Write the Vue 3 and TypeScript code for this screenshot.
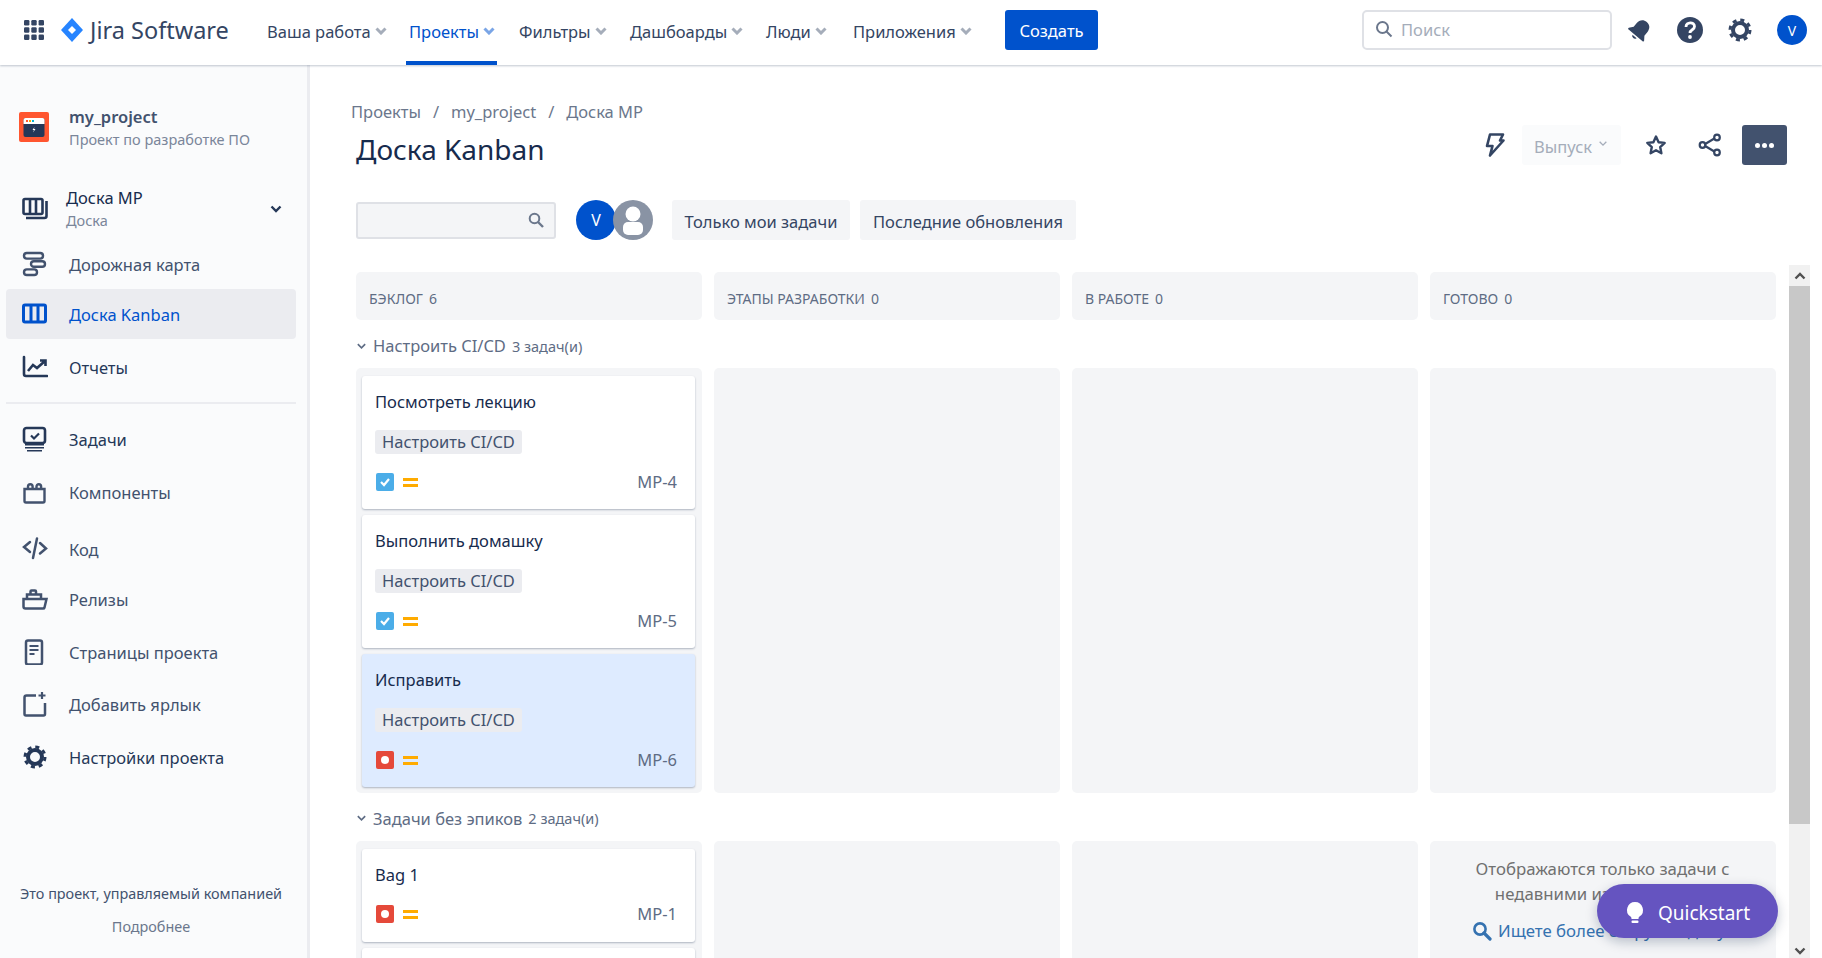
<script setup lang="ts">
interface NavItem { label: string; active?: boolean; w: number }
interface SideItem { label: string; icon: string; top: number; active?: boolean; dark?: boolean }
interface Card { title: string; epic?: string; type: 'task' | 'bug'; key: string; selected?: boolean }

const navItems: NavItem[] = [
  { label: 'Ваша работа', w: 142 },
  { label: 'Проекты', active: true, w: 110 },
  { label: 'Фильтры', w: 111 },
  { label: 'Дашбоарды', w: 136 },
  { label: 'Люди', w: 87 }
]

const sideTop: SideItem[] = [
  { label: 'Дорожная карта', icon: 'roadmap', top: 0 },
  { label: 'Доска Kanban', icon: 'kanban', top: 0, active: true },
  { label: 'Отчеты', icon: 'reports', top: 3, dark: true }
]

const sideBottom: SideItem[] = [
  { label: 'Задачи', icon: 'issues', top: 10, dark: true },
  { label: 'Компоненты', icon: 'components', top: 3 },
  { label: 'Код', icon: 'code', top: 7 },
  { label: 'Релизы', icon: 'releases', top: 0 },
  { label: 'Страницы проекта', icon: 'pages', top: 3 },
  { label: 'Добавить ярлык', icon: 'shortcut', top: 2 },
  { label: 'Настройки проекта', icon: 'settings', top: 3, dark: true }
]

const gear = '<circle cx="13" cy="13" r="7" fill="none" stroke="currentColor" stroke-width="4"/><circle cx="13" cy="13" r="10" fill="none" stroke="currentColor" stroke-width="3" stroke-dasharray="4 3.85"/>'

const icons: Record<string, string> = {
  roadmap: '<g fill="none" stroke="currentColor" stroke-width="2.4"><rect x="2" y="2" width="19" height="5.6" rx="2.8"/><rect x="9" y="10.2" width="14" height="5.6" rx="2.8"/><rect x="2" y="18.4" width="13" height="5.6" rx="2.8"/></g>',
  kanban: '<g fill="none" stroke="currentColor" stroke-width="3"><rect x="1.5" y="4" width="22" height="17" rx="1.5"/><path d="M9 4v17M16 4v17"/></g>',
  reports: '<g fill="none" stroke="currentColor" stroke-width="2.6"><path d="M2 3v17a2 2 0 0 0 2 2h21" stroke-linecap="round"/><path d="M6 17l5-6 4 3 8-7M18 6.5h5.5V12"/></g>',
  issues: '<rect x="2" y="2" width="21" height="15" rx="2.5" fill="none" stroke="currentColor" stroke-width="2.6"/><path d="M9 9.5l3 3 5-5" fill="none" stroke="currentColor" stroke-width="2.2"/><path d="M3 18h19v1.4H3zM3 21h19v1.6H3zM5 24h15v1.4H5z" fill="currentColor"/>',
  components: '<path d="M2.5 10h20v12a1.5 1.5 0 0 1-1.5 1.500H4A1.500 1.500 0 0 1 2.500 22zM6 10V7.500a2.300 2.300 0 0 1 4.600 0V10M14.500 10V7.500a2.300 2.300 0 0 1 4.600 0V10" fill="none" stroke="currentColor" stroke-width="2.400"/>',
  code: '<g fill="none" stroke="currentColor" stroke-width="2.500" stroke-linecap="round"><path d="M8 6l-6 5 6 5M18 7l6 5.500-6 5M15 2.500L11 22"/></g>',
  releases: '<g fill="none" stroke="currentColor" stroke-width="2.500"><path d="M1.500 13h23l-2 8.500a1.500 1.500 0 0 1-1.500 1H3.500a2 2 0 0 1-2-2zM5 13V8.500h14V13M8.500 8.500V5.500a1 1 0 0 1 1-1h3.500a1 1 0 0 1 1 1v3"/></g>',
  pages: '<rect x="4" y="1.500" width="16" height="24" rx="2" fill="none" stroke="currentColor" stroke-width="2.500"/><path d="M7.500 6h9v2h-9zM7.500 10h9v2h-9zM7.500 14h5v2h-5z" fill="currentColor"/>',
  shortcut: '<path d="M14 4.500H4.500a2 2 0 0 0-2 2V23a1.500 1.500 0 0 0 1.500 1.500h17.500a1.500 1.500 0 0 0 1.500-1.500V12" fill="none" stroke="currentColor" stroke-width="2.500"/><path d="M20 1v7M16.500 4.500h7" fill="none" stroke="currentColor" stroke-width="2.200"/>',
  settings: gear
}

const lanes: { name: string; count: string; cards: Card[] }[] = [
  {
    name: 'Настроить CI/CD',
    count: '3 задач(и)',
    cards: [
      { title: 'Посмотреть лекцию', epic: 'Настроить CI/CD', type: 'task', key: 'MP-4' },
      { title: 'Выполнить домашку', epic: 'Настроить CI/CD', type: 'task', key: 'MP-5' },
      { title: 'Исправить', epic: 'Настроить CI/CD', type: 'bug', key: 'MP-6', selected: true }
    ]
  },
  {
    name: 'Задачи без эпиков',
    count: '2 задач(и)',
    cards: [
      { title: 'Bag 1', type: 'bug', key: 'MP-1' },
      { title: 'Bag 2', type: 'bug', key: 'MP-2' }
    ]
  }
]

const columns = [
  { name: 'Бэклог', count: 6 },
  { name: 'Этапы разработки', count: 0 },
  { name: 'В работе', count: 0 },
  { name: 'Готово', count: 0 }
]
</script>

<template>
  <div class="page">
    <header class="topbar">
      <svg class="apps" viewBox="0 0 20 20">
        <g fill="#344563">
          <rect v-for="c in 9" :key="c" :x="((c - 1) % 3) * 7.300" :y="Math.floor((c - 1) / 3) * 7.300" width="5.400" height="5.400" rx="1.200" />
        </g>
      </svg>
      <svg class="logo" viewBox="0 0 22 24">
        <path d="M11 0l11 12-11 12L0 12z" fill="#2684ff" />
        <path d="M11 8l4 4-4 4-4-4z" fill="#fff" />
      </svg>
      <span class="brand">Jira Software</span>
      <nav class="nav">
        <a v-for="item in navItems" :key="item.label" class="nav-item" :class="{ active: item.active }" :style="{ width: item.w + 'px' }">
          {{ item.label }}
          <svg class="caret" viewBox="0 0 12 8"><path d="M1.500 1.500L6 6l4.500-4.500" fill="none" stroke="currentColor" stroke-width="3" /></svg>
        </a>
        <a class="nav-item last">
          Приложения
          <svg class="caret" viewBox="0 0 12 8"><path d="M1.500 1.500L6 6l4.500-4.500" fill="none" stroke="currentColor" stroke-width="3" /></svg>
        </a>
      </nav>
      <button class="create">Создать</button>
      <div class="search">
        <svg width="18" height="18" viewBox="0 0 18 18"><circle cx="7.500" cy="7.500" r="5.500" fill="none" stroke="#6b778c" stroke-width="2" /><path d="M11.500 11.500l5 5" stroke="#6b778c" stroke-width="2" /></svg>
        <span>Поиск</span>
      </div>
      <div class="top-icons">
        <svg width="24" height="24" viewBox="0 0 24 24" fill="#344563">
          <g transform="rotate(40 12 12)">
            <path d="M12 1.500c-4.500 0-7 3.300-7 7.500v4.500L2 17.500v1.500h20v-1.500l-3-4V9c0-4.200-2.500-7.500-7-7.500z" />
            <path d="M9.300 20.500a2.800 2.800 0 0 0 5.400 0z" />
          </g>
        </svg>
        <svg width="26" height="26" viewBox="0 0 26 26">
          <circle cx="13" cy="13" r="13" fill="#344563" />
          <path d="M9 10c0-5.500 8.500-5.500 8.500-.5 0 3.500-4.500 3-4.500 6.500" fill="none" stroke="#fff" stroke-width="2.800" />
          <circle cx="13" cy="20" r="1.900" fill="#fff" />
        </svg>
        <svg class="top-gear" width="26" height="26" viewBox="0 0 26 26" v-html="gear"></svg>
        <span class="avatar">V</span>
      </div>
    </header>

    <div class="body">
      <aside class="sidebar">
        <div class="project">
          <svg class="project-icon" viewBox="0 0 30 30">
            <rect width="30" height="30" rx="2" fill="#ff5630" />
            <rect x="4.500" y="6" width="21" height="19" rx="2" fill="#253858" />
            <path d="M4.500 8a2 2 0 0 1 2-2h17a2 2 0 0 1 2 2v4h-21z" fill="#fff" />
            <rect x="7" y="8" width="2" height="2" fill="#ff5630" />
            <rect x="10" y="8" width="2" height="2" fill="#ffab00" />
            <rect x="13" y="8" width="2" height="2" fill="#00b8d9" />
            <path d="M15.500 15l-2 3h1.500l-1 2.500 2.500-3.500h-1.500z" fill="#fff" />
          </svg>
          <div>
            <div class="project-name">my_project</div>
            <div class="project-type">Проект по разработке ПО</div>
          </div>
        </div>

        <div class="board-switch">
          <svg class="side-icon" viewBox="0 0 26 26">
            <g fill="none" stroke="#253858" stroke-width="2.600">
              <rect x="1.500" y="3" width="19" height="15" rx="1.500" />
              <path d="M8 3v15M14 3v15" />
              <path d="M24.500 5v15a2 2 0 0 1-2 2H4" />
            </g>
          </svg>
          <div class="board-text">
            <div class="board-name">Доска МР</div>
            <div class="board-type">Доска</div>
          </div>
          <svg class="board-caret" viewBox="0 0 12 8"><path d="M1.500 1.500L6 6l4.500-4.500" fill="none" stroke="#253858" stroke-width="2.400" /></svg>
        </div>

        <a v-for="item in sideTop" :key="item.label" class="side-item" :class="{ active: item.active, dark: item.dark }" :style="{ marginTop: item.top + 'px' }">
          <svg class="side-icon" viewBox="0 0 26 26" v-html="icons[item.icon]"></svg>
          <span>{{ item.label }}</span>
        </a>
        <div class="side-divider"></div>
        <a v-for="item in sideBottom" :key="item.label" class="side-item" :class="{ dark: item.dark }" :style="{ marginTop: item.top + 'px' }">
          <svg class="side-icon" viewBox="0 0 26 26" v-html="icons[item.icon]"></svg>
          <span>{{ item.label }}</span>
        </a>

        <div class="side-foot">
          <div>Это проект, управляемый компанией</div>
          <div class="more-link">Подробнее</div>
        </div>
      </aside>

      <main class="main">
        <div class="page-head">
          <div>
            <div class="crumbs">
              <span>Проекты</span><i>/</i><span>my_project</span><i>/</i><span>Доска МР</span>
            </div>
            <h1>Доска Kanban</h1>
          </div>
          <div class="head-actions">
            <svg class="bolt" width="22" height="26" viewBox="0 0 22 26">
              <path d="M7 2.500h13l-3 6h3.500L7 23.500l2.500-9.500H4z" fill="none" stroke="#344563" stroke-width="2.600" stroke-linejoin="round" />
            </svg>
            <button class="release">Выпуск <svg viewBox="0 0 12 8"><path d="M2 2l4 4 4-4" fill="none" stroke="currentColor" stroke-width="1.600" /></svg></button>
            <svg class="star" width="22" height="22" viewBox="0 0 22 22">
              <path d="M11 2.500l2.600 5.700 6.100.7-4.500 4.200 1.200 6.100L11 16.200l-5.400 3 1.200-6.100-4.500-4.200 6.100-.7z" fill="none" stroke="#344563" stroke-width="2.400" stroke-linejoin="round" />
            </svg>
            <svg class="share" width="24" height="24" viewBox="0 0 24 24">
              <g fill="none" stroke="#344563" stroke-width="2.200">
                <path d="M5.500 12L18 4.500M5.500 12L18 19.500" />
                <circle cx="4.500" cy="12" r="2.800" fill="#fff" />
                <circle cx="19" cy="4.500" r="2.800" fill="#fff" />
                <circle cx="19" cy="19.500" r="2.800" fill="#fff" />
              </g>
            </svg>
            <button class="more"><b></b><b></b><b></b></button>
          </div>
        </div>

        <div class="filters">
          <div class="filter-search">
            <svg width="16" height="16" viewBox="0 0 16 16"><circle cx="6.500" cy="6.500" r="4.800" fill="none" stroke="#6b778c" stroke-width="2" /><path d="M10 10l5 5" stroke="#6b778c" stroke-width="2.400" /></svg>
          </div>
          <div class="people">
            <span class="person">V</span>
            <span class="person ghost">
              <svg width="40" height="40" viewBox="0 0 40 40">
                <circle cx="20" cy="14" r="7.500" fill="#fff" />
                <rect x="10" y="22" width="20" height="13" rx="5" fill="#fff" />
              </svg>
            </span>
          </div>
          <button class="quick first">Только мои задачи</button>
          <button class="quick">Последние обновления</button>
        </div>

        <div class="board-wrap">
          <div class="board">
            <div class="col-heads">
              <div v-for="col in columns" :key="col.name" class="col-head">{{ col.name }}<span>{{ col.count }}</span></div>
            </div>

            <section v-for="(lane, i) in lanes" :key="lane.name" class="lane">
              <div class="lane-title">
                <svg viewBox="0 0 12 8"><path d="M2 2l4 4 4-4" fill="none" stroke="#5e6c84" stroke-width="1.800" /></svg>
                {{ lane.name }}<small>{{ lane.count }}</small>
              </div>
              <div class="lane-cols">
                <div class="col">
                  <article v-for="card in lane.cards" :key="card.key" class="card" :class="{ selected: card.selected, short: !card.epic }">
                    <div class="card-title">{{ card.title }}</div>
                    <div v-if="card.epic" class="epic">{{ card.epic }}</div>
                    <div class="card-foot">
                      <span class="type" :class="card.type">
                        <svg v-if="card.type === 'task'" width="12" height="12" viewBox="0 0 12 12"><path d="M2 6l3 3 5-6" fill="none" stroke="#fff" stroke-width="2.200" /></svg>
                      </span>
                      <span class="priority"></span>
                      <span class="key">{{ card.key }}</span>
                    </div>
                  </article>
                </div>
                <div class="col"></div>
                <div class="col"></div>
                <div class="col notice-col">
                  <div v-if="i === 1" class="notice">
                    <p>Отображаются только задачи с недавними изменениями.</p>
                    <a>
                      <svg width="20" height="20" viewBox="0 0 20 20"><circle cx="8" cy="8" r="5.600" fill="none" stroke="#3572b0" stroke-width="2.600" /><path d="M12 12l6 6" stroke="#3572b0" stroke-width="3.200" stroke-linecap="round" /></svg>
                      Ищете более старую задачу?
                    </a>
                  </div>
                </div>
              </div>
            </section>
          </div>
          <div class="scrollbar">
            <div class="sb-btn"><svg width="12" height="8" viewBox="0 0 12 8"><path d="M1.500 6.500L6 2l4.500 4.500" fill="none" stroke="#505050" stroke-width="2.400" /></svg></div>
            <div class="sb-thumb"></div>
            <div class="sb-rest">
              <svg width="12" height="8" viewBox="0 0 12 8"><path d="M1.500 1.500L6 6l4.500-4.500" fill="none" stroke="#505050" stroke-width="2.400" /></svg>
            </div>
          </div>
        </div>
      </main>
    </div>

    <button class="quickstart">
      <svg width="20" height="24" viewBox="0 0 20 24">
        <path d="M10 1a8 8 0 0 0-4.500 14.600c.8.600 1 1.400 1 2.400h7c0-1 .2-1.800 1-2.400A8 8 0 0 0 10 1z" fill="#fff" />
        <rect x="6.500" y="19.500" width="7" height="2.500" rx="1" fill="#fff" />
      </svg>
      Quickstart
    </button>
  </div>
</template>

<style>
html,
body {
  margin: 0;
  overflow: hidden;
}
</style>

<style scoped>
.page {
  position: relative;
  width: 1822px;
  height: 958px;
  overflow: hidden;
  background: #fff;
  font-family: "Noto Sans", "Open Sans", sans-serif;
  font-size: 16.5px;
  color: #172b4d;
}

.topbar {
  position: relative;
  z-index: 2;
  display: flex;
  align-items: flex-start;
  height: 65px;
  box-sizing: border-box;
  padding-left: 24px;
  background: #fff;
  box-shadow: 0 1px 2px rgba(9, 30, 66, 0.25);
}

.apps {
  width: 20px;
  height: 20px;
  margin-top: 20px;
}

.logo {
  width: 22px;
  height: 24px;
  margin: 18px 0 0 17px;
}

.brand {
  margin: 13px 0 0 7px;
  width: 143px;
  font-size: 23.5px;
  line-height: 34px;
  color: #344563;
  white-space: nowrap;
}

.nav {
  display: flex;
  height: 65px;
  margin-left: 34px;
}

.nav-item {
  position: relative;
  display: flex;
  align-items: center;
  box-sizing: border-box;
  height: 62px;
  padding-left: 0;
  color: #344563;
  white-space: nowrap;
}

.nav-item.active {
  color: #0052cc;
}

.nav-item.active::after {
  content: "";
  position: absolute;
  left: -3px;
  bottom: -3px;
  width: 91px;
  height: 4px;
  background: #0052cc;
}

.nav-item.last {
  width: 152px;
}

.caret {
  width: 12px;
  height: 8px;
  margin-left: 4px;
  color: #a5adba;
}

.nav-item.active .caret {
  color: #7aa5e6;
}

.create {
  width: 93px;
  height: 40px;
  margin-top: 10px;
  padding: 0;
  border: 0;
  border-radius: 3px;
  background: #0052cc;
  color: #fff;
  font: inherit;
}

.search {
  display: flex;
  align-items: center;
  gap: 8px;
  width: 250px;
  height: 40px;
  box-sizing: border-box;
  margin: 10px 0 0 264px;
  padding: 0 0 2px 11px;
  border: 2px solid #dfe1e6;
  border-radius: 5px;
  color: #a5adba;
}

.top-icons {
  display: flex;
  align-items: center;
  height: 40px;
  margin: 10px 0 0 16px;
}

.top-icons svg:nth-child(2) {
  margin-left: 25px;
}

.top-gear {
  margin-left: 24px;
  color: #344563;
}

.avatar {
  display: flex;
  align-items: center;
  justify-content: center;
  width: 30px;
  height: 30px;
  margin-left: 24px;
  border-radius: 50%;
  background: #0052cc;
  color: #fff;
  font-size: 14px;
}

.body {
  display: flex;
  height: 893px;
}

.sidebar {
  position: relative;
  flex: none;
  width: 310px;
  box-sizing: border-box;
  padding: 0 11px 0 6px;
  background: #fafbfc;
  border-right: 3px solid #ebecf0;
}

.project {
  display: flex;
  align-items: center;
  height: 112px;
  padding: 11px 0 0 13px;
  box-sizing: border-box;
}

.project-icon {
  width: 30px;
  height: 30px;
  margin-right: 20px;
}

.project-name {
  font-weight: 600;
  color: #42526e;
}

.project-type {
  margin-top: 1px;
  font-size: 14.5px;
  color: #7a869a;
}

.board-switch {
  display: flex;
  align-items: center;
  height: 62px;
  padding-top: 1px;
  box-sizing: border-box;
}

.side-icon {
  flex: none;
  width: 26px;
  height: 26px;
  margin-left: 16px;
}

.board-text {
  margin-left: 18px;
}

.board-name {
  line-height: 23px;
}

.board-type {
  font-size: 14.5px;
  line-height: 23px;
  color: #7a869a;
}

.board-caret {
  width: 12px;
  height: 8px;
  margin-left: auto;
  margin-right: 14px;
}

.side-item {
  display: flex;
  align-items: center;
  height: 50px;
  border-radius: 4px;
  color: #42526e;
}

.side-item span {
  margin-left: 21px;
}

.side-item.dark {
  color: #253858;
}

.side-item.active {
  background: #ebecf0;
  color: #0052cc;
}

.side-divider {
  height: 2px;
  margin-top: 10px;
  background: #ebecf0;
}

.side-foot {
  position: absolute;
  left: 0;
  right: 5px;
  bottom: 22px;
  text-align: center;
  font-size: 14.4px;
  color: #42526e;
}

.more-link {
  margin-top: 14px;
  color: #6b778c;
}

.main {
  flex: 1;
  min-width: 0;
  display: flex;
  flex-direction: column;
  padding: 35px 12px 0 46px;
}

.page-head {
  display: flex;
  justify-content: space-between;
  height: 100px;
  padding-right: 23px;
}

.crumbs {
  display: flex;
  margin-left: -5px;
  line-height: 24px;
  color: #6b778c;
}

.crumbs i {
  width: 30px;
  text-align: center;
  font-style: normal;
}

h1 {
  margin: 5px 0 0;
  font-size: 28px;
  font-weight: 400;
  line-height: 40px;
}

.head-actions {
  display: flex;
  align-items: center;
  height: 40px;
  margin-top: 25px;
}

.release {
  display: flex;
  align-items: center;
  gap: 6px;
  width: 99px;
  height: 40px;
  margin-left: 17px;
  padding: 3px 0 0 12px;
  border: 0;
  border-radius: 3px;
  background: #fafbfc;
  color: #a5adba;
  font: inherit;
}

.release svg {
  width: 10px;
  height: 7px;
  margin-top: -6px;
}

.star {
  margin-left: 24px;
}

.share {
  margin-left: 31px;
}

.more {
  display: flex;
  align-items: center;
  justify-content: center;
  gap: 2px;
  width: 45px;
  height: 40px;
  margin-left: 20px;
  padding: 0;
  border: 0;
  border-radius: 3px;
  background: #42526e;
}

.more b {
  width: 5px;
  height: 5px;
  border-radius: 50%;
  background: #fff;
}

.filters {
  display: flex;
  align-items: center;
  height: 40px;
}

.filter-search {
  display: flex;
  align-items: center;
  justify-content: flex-end;
  width: 200px;
  height: 37px;
  box-sizing: border-box;
  padding-right: 10px;
  border: 2px solid #dfe1e6;
  border-radius: 3px;
  background: #f4f5f7;
}

.people {
  display: flex;
  margin-left: 20px;
}

.person {
  display: flex;
  align-items: center;
  justify-content: center;
  width: 40px;
  height: 40px;
  border-radius: 50%;
  background: #0052cc;
  color: #fff;
  font-size: 16px;
}

.person.ghost {
  margin-left: -3px;
  background: #8993a4;
}

.quick {
  height: 40px;
  margin-left: 10px;
  padding: 2px 13px 0;
  border: 0;
  border-radius: 3px;
  background: #f4f5f7;
  color: #344563;
  font: inherit;
}

.quick.first {
  width: 178px;
  margin-left: 19px;
  padding: 2px 0 0;
}

.board-wrap {
  flex: 1;
  display: flex;
  min-height: 0;
  margin-top: 25px;
}

.board {
  width: 1420px;
  padding-top: 7px;
  overflow: hidden;
}

.col-heads,
.lane-cols {
  display: grid;
  grid-template-columns: repeat(4, 346px);
  gap: 12px;
}

.col-head {
  height: 48px;
  box-sizing: border-box;
  padding: 17px 0 0 13px;
  border-radius: 5px;
  background: #f4f5f7;
  color: #5e6c84;
  font-size: 14px;
  text-transform: uppercase;
}

.col-head span {
  margin-left: 6px;
}

.lane-title {
  display: flex;
  align-items: center;
  height: 48px;
  box-sizing: border-box;
  padding-top: 3px;
  color: #5e6c84;
}

.lane-title svg {
  width: 11px;
  height: 8px;
  margin-right: 6px;
}

.lane-title small {
  margin-left: 6px;
  font-size: 14.5px;
}

.col {
  min-height: 425px;
  box-sizing: border-box;
  padding: 8px 7px 6px 6px;
  border-radius: 5px;
  background: #f4f5f7;
}

.lane + .lane .lane-title {
  padding-top: 2px;
}

.card {
  height: 133px;
  box-sizing: border-box;
  padding: 12px 13px 0;
  border-radius: 3px;
  background: #fff;
  box-shadow: 0 1px 2px rgba(9, 30, 66, 0.3);
}

.card + .card {
  margin-top: 6px;
}

.card.selected {
  background: #deebff;
}

.card.short {
  height: 93px;
}

.card-title {
  line-height: 28px;
}

.epic {
  display: inline-block;
  margin-top: 14px;
  padding: 0 7px;
  border-radius: 3px;
  background: #ebecf0;
  color: #42526e;
  line-height: 24px;
}

.card-foot {
  display: flex;
  align-items: center;
  height: 22px;
  margin-top: 17px;
}

.card.short .card-foot {
  margin-top: 14px;
}

.type {
  display: flex;
  align-items: center;
  justify-content: center;
  width: 18px;
  height: 18px;
  margin-left: 1px;
  border-radius: 2px;
}

.type.task {
  background: #4bade8;
}

.type.bug {
  background: #e5493a;
}

.type.bug::after {
  content: "";
  width: 8px;
  height: 8px;
  border-radius: 50%;
  background: #fff;
}

.priority {
  width: 15px;
  height: 3px;
  margin-left: 9px;
  border-top: 3px solid #ffab00;
  border-bottom: 3px solid #ffab00;
}

.key {
  margin-left: auto;
  margin-right: 5px;
  margin-top: -2px;
  color: #5e6c84;
}

.notice {
  padding: 7px 10px 0;
  text-align: center;
  font-size: 16.8px;
  color: #707070;
}

.notice p {
  margin: 0 0 13px;
  line-height: 25px;
}

.notice a {
  display: flex;
  align-items: center;
  justify-content: center;
  gap: 6px;
  color: #3572b0;
  white-space: nowrap;
}

.scrollbar {
  display: flex;
  flex-direction: column;
  flex: none;
  width: 21px;
  margin-left: 13px;
  background: #f1f1f1;
}

.sb-btn {
  display: flex;
  align-items: center;
  justify-content: center;
  height: 21px;
}

.sb-thumb {
  height: 538px;
  background: #c8c8c8;
}

.sb-rest {
  flex: 1;
  display: flex;
  align-items: flex-end;
  justify-content: center;
  padding-bottom: 3px;
}

.quickstart {
  position: absolute;
  left: 1597px;
  top: 884px;
  display: flex;
  align-items: center;
  gap: 13px;
  width: 181px;
  height: 54px;
  padding: 3px 0 0 28px;
  border: 0;
  border-radius: 27px;
  background: #6554c0;
  color: #fff;
  font: inherit;
  font-size: 19px;
  box-shadow: 0 4px 12px rgba(9, 30, 66, 0.25);
}
</style>
